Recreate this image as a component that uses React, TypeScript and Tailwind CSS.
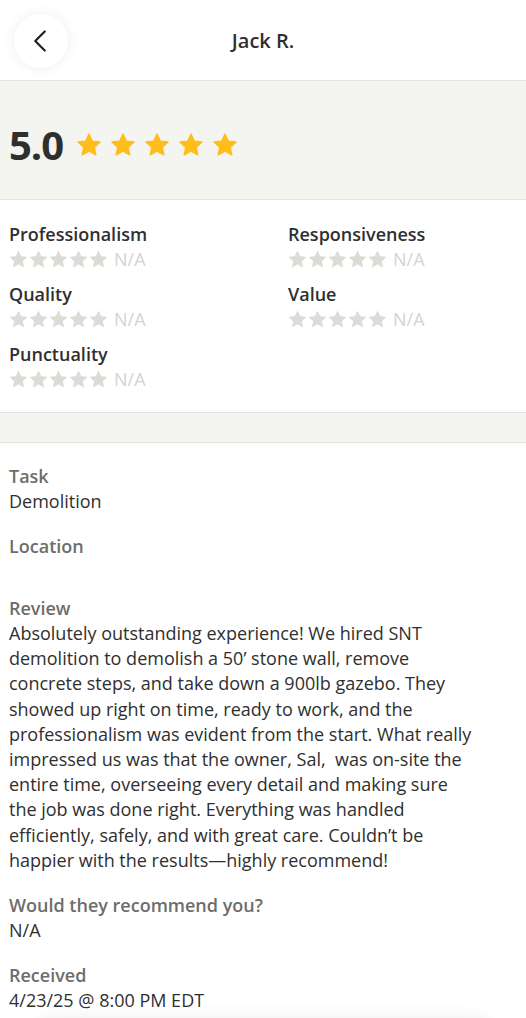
import { ChevronLeft } from "lucide-react";

const font = { fontFamily: '"Open Sans", "Liberation Sans", sans-serif' };

const review =
  "Absolutely outstanding experience! We hired SNT demolition to demolish a 50’ stone wall, remove concrete steps, and take down a 900lb gazebo. They showed up right on time, ready to work, and the professionalism was evident from the start. What really impressed us was that the owner, Sal,  was on-site the entire time, overseeing every detail and making sure the job was done right. Everything was handled efficiently, safely, and with great care. Couldn’t be happier with the results—highly recommend!";

const categories = ["Professionalism", "Responsiveness", "Quality", "Value", "Punctuality"];

function Star({ size, className }: { size: number; className: string }) {
  return (
    <svg width={size} height={size} viewBox="0 0 24 24" className={className}>
      <path
        fill="currentColor"
        strokeLinejoin="round"
        stroke="currentColor"
        strokeWidth="1.2"
        d="M12 1.8l3.05 6.55 7.15.85-5.3 4.9 1.42 7.1L12 17.6l-6.32 3.6 1.42-7.1-5.3-4.9 7.15-.85z"
      />
    </svg>
  );
}

function Field({ label, value, emptyHeight }: { label: string; value?: string; emptyHeight?: boolean }) {
  return (
    <div>
      <div className="text-[18px] leading-[25px] font-semibold text-[#6d6d6b]">{label}</div>
      {value ? (
        <div className="text-[18px] leading-[25px] text-[#2f2f2f]">{value}</div>
      ) : emptyHeight ? (
        <div className="h-[17px]" />
      ) : null}
    </div>
  );
}

export default function App() {
  return (
    <div className="min-h-screen bg-white text-[#2f2f2f]" style={font}>
      {/* Header */}
      <div className="relative h-[81px] flex items-center justify-center border-b border-[#e3e3df]">
        <button className="absolute left-[14px] top-[14px] w-[54px] h-[54px] rounded-full bg-white shadow-[0_0_14px_rgba(0,0,0,0.07)] flex items-center justify-center">
          <ChevronLeft size={38} strokeWidth={1.4} className="text-[#222] -ml-[2px]" />
        </button>
        <div className="text-[20px] font-semibold text-[#2f2f2f] mt-[2px]">Jack R.</div>
      </div>

      {/* Overall rating */}
      <div className="bg-[#f4f4f1] border-b border-[#e3e3df] pt-[42px] pb-[32px] px-[9px] flex items-center gap-[13px]">
        <div className="text-[40px] leading-[44px] font-bold tracking-[-1px] text-[#2f2f2f]">5.0</div>
        <div className="flex gap-[8px]">
          {[0, 1, 2, 3, 4].map((i) => (
            <Star key={i} size={26} className="text-[#ffbd1b]" />
          ))}
        </div>
      </div>

      {/* Category ratings */}
      <div className="grid grid-cols-[279px_1fr] gap-y-[10px] px-[9px] pt-[22px] pb-[20px] border-b border-[#e3e3df]">
        {categories.map((c) => (
          <div key={c}>
            <div className="text-[18px] leading-[25px] font-semibold text-[#2f2f2f]">{c}</div>
            <div className="flex items-center h-[25px]">
              <div className="flex gap-[1px]">
                {[0, 1, 2, 3, 4].map((i) => (
                  <Star key={i} size={19} className="text-[#dcdbd6]" />
                ))}
              </div>
              <span className="ml-[6px] text-[18px] text-[#d4d4d0]">N/A</span>
            </div>
          </div>
        ))}
      </div>

      <div className="h-[30px] bg-[#f4f4f1] border-b border-[#e3e3df]" />

      {/* Details */}
      <div className="px-[9px] pt-[21px] flex flex-col gap-[20px]">
        <Field label="Task" value="Demolition" />
        <Field label="Location" emptyHeight />
        <div>
          <div className="text-[18px] leading-[25px] font-semibold text-[#6d6d6b]">Review</div>
          <p className="text-[18px] leading-[25.2px] text-[#2f2f2f] pr-[40px] whitespace-pre-wrap">{review}</p>
        </div>
        <Field label="Would they recommend you?" value="N/A" />
        <Field label="Received" value="4/23/25 @ 8:00 PM EDT" />
      </div>

      <div className="mx-[28px] mt-[6px] h-[40px] rounded-t-[28px] bg-white shadow-[0_-4px_16px_rgba(0,0,0,0.05)]" />
    </div>
  );
}
